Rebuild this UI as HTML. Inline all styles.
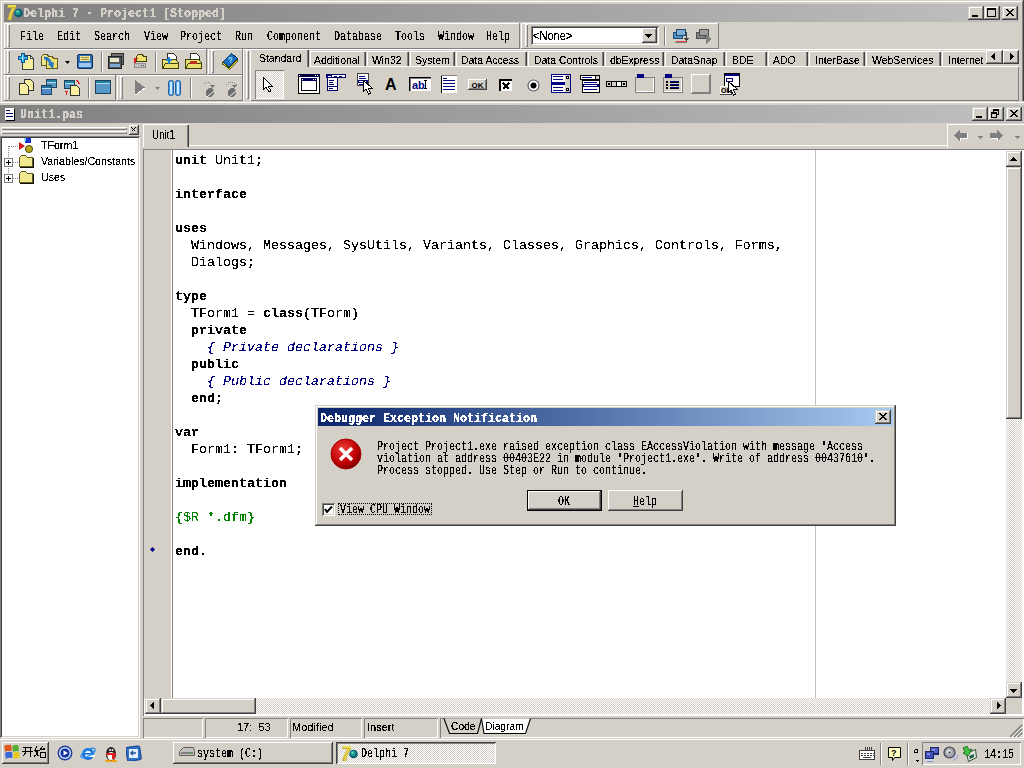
<!DOCTYPE html>
<html><head><meta charset="utf-8"><style>
*{margin:0;padding:0;box-sizing:border-box}
html,body{width:1024px;height:768px;overflow:hidden;background:#d4d0c8;position:relative;font-family:"Liberation Sans",sans-serif}
div,span,svg{position:absolute}
.btn{background:#d4d0c8;box-shadow:inset -1px -1px #404040,inset 1px 1px #fff,inset -2px -2px #808080}
.band{background:#d4d0c8;box-shadow:inset -1px -1px #808080,inset 1px 1px #fff}
.sunk{box-shadow:inset 1px 1px #808080,inset -1px -1px #fff}
.sunk2{box-shadow:inset 1px 1px #808080,inset -1px -1px #fff,inset 2px 2px #404040,inset -2px -2px #d4d0c8}
.grip{width:3px;box-shadow:inset 1px 1px #fff,inset -1px -1px #808080}
.ss,.ssb{filter:url(#thr)}
.code{filter:url(#thr5)}
.ts{filter:url(#thr5)}
.sbtn{background:#d4d0c8;box-shadow:inset -1px -1px #404040,inset 1px 1px #d4d0c8,inset -2px -2px #808080,inset 2px 2px #fff}
.ss{font-family:"Liberation Mono",monospace;font-size:12px;line-height:12px;white-space:pre;transform:scaleX(.8333);transform-origin:0 0;color:#000}
.ssb{font-family:"Liberation Mono",monospace;font-weight:bold;font-size:12px;line-height:12px;white-space:pre;transform:scaleX(.9722);transform-origin:0 0}
.ts{font-family:"Liberation Sans",sans-serif;font-size:11px;line-height:12px;white-space:pre;color:#000}
.code{left:175px;top:152px;font-family:"Liberation Mono",monospace;font-size:13.333px;line-height:17px;white-space:pre;color:#000}
.code b{font-weight:bold;position:static}
.code i{color:#000080;font-style:italic;position:static}
.code u{color:#008000;text-decoration:none;position:static}
.dith{background:repeating-conic-gradient(#fff 0 25%,#d4d0c8 0 50%) 0 0/2px 2px}
</style></head><body>
<svg width="0" height="0" style="position:absolute"><filter id="thr" x="0" y="0" width="100%" height="100%"><feComponentTransfer><feFuncA type="discrete" tableValues="0 1 1"/></feComponentTransfer></filter><filter id="thr5" x="0" y="0" width="100%" height="100%"><feComponentTransfer><feFuncA type="discrete" tableValues="0 0 1 1 1"/></feComponentTransfer></filter></svg>
<div style="left:1px;top:1px;width:1021px;height:1px;background:#fff"></div>
<div style="left:1px;top:1px;width:1px;height:100px;background:#fff"></div>
<div style="left:1022px;top:1px;width:1px;height:100px;background:#808080"></div>
<div style="left:1023px;top:0px;width:1px;height:101px;background:#404040"></div>
<div style="left:4px;top:4px;width:1015px;height:18px;background:linear-gradient(90deg,#808080,#c0c0c0)"></div>
<svg style="left:6px;top:4px" width="17" height="17" viewBox="0 0 17 17" shape-rendering="crispEdges"><path d="M1.5 1H10V3.5L6.5 10L5.5 16H1L3 10L6 4H1.5Z" fill="#c8a830" shape-rendering="auto"/><path d="M1.5 1H10V3H1.5Z" fill="#e8e050" /><path d="M6 3.5H9L6 10L5 15.5H2.5L3.5 10Z" fill="#e0d048" shape-rendering="auto"/><circle cx="12.5" cy="9" r="4.3" fill="#0a5a70" shape-rendering="auto"/><circle cx="12" cy="8.3" r="2.6" fill="#20a090" shape-rendering="auto"/><circle cx="11.5" cy="7.5" r="1" fill="#80e0d0" shape-rendering="auto"/></svg>
<span class="ssb" style="left:23px;top:8px;color:#d4d0c8">Delphi 7 - Project1 [Stopped]</span>
<div class="sbtn" style="left:968px;top:6px;width:16px;height:14px"></div><svg style="left:968px;top:6px" width="16" height="14" viewBox="0 0 16 14" shape-rendering="crispEdges"><rect x="4" y="9" width="6" height="2" fill="#000"/></svg>
<div class="sbtn" style="left:984px;top:6px;width:16px;height:14px"></div><svg style="left:984px;top:6px" width="16" height="14" viewBox="0 0 16 14" shape-rendering="crispEdges"><rect x="3" y="2" width="9" height="2" fill="#000"/><rect x="3" y="2" width="1" height="9" fill="#000"/><rect x="11" y="2" width="1" height="9" fill="#000"/><rect x="3" y="10" width="9" height="1" fill="#000"/></svg>
<div class="sbtn" style="left:1002px;top:6px;width:16px;height:14px"></div><svg style="left:1002px;top:6px" width="16" height="14" viewBox="0 0 16 14" shape-rendering="crispEdges"><rect x="4" y="3" width="1" height="1" fill="#000"/><rect x="5" y="3" width="1" height="1" fill="#000"/><rect x="10" y="3" width="1" height="1" fill="#000"/><rect x="11" y="3" width="1" height="1" fill="#000"/><rect x="5" y="4" width="1" height="1" fill="#000"/><rect x="6" y="4" width="1" height="1" fill="#000"/><rect x="9" y="4" width="1" height="1" fill="#000"/><rect x="10" y="4" width="1" height="1" fill="#000"/><rect x="6" y="5" width="1" height="1" fill="#000"/><rect x="7" y="5" width="1" height="1" fill="#000"/><rect x="8" y="5" width="1" height="1" fill="#000"/><rect x="9" y="5" width="1" height="1" fill="#000"/><rect x="7" y="6" width="1" height="1" fill="#000"/><rect x="8" y="6" width="1" height="1" fill="#000"/><rect x="6" y="7" width="1" height="1" fill="#000"/><rect x="7" y="7" width="1" height="1" fill="#000"/><rect x="8" y="7" width="1" height="1" fill="#000"/><rect x="9" y="7" width="1" height="1" fill="#000"/><rect x="5" y="8" width="1" height="1" fill="#000"/><rect x="6" y="8" width="1" height="1" fill="#000"/><rect x="9" y="8" width="1" height="1" fill="#000"/><rect x="10" y="8" width="1" height="1" fill="#000"/><rect x="4" y="9" width="1" height="1" fill="#000"/><rect x="5" y="9" width="1" height="1" fill="#000"/><rect x="10" y="9" width="1" height="1" fill="#000"/><rect x="11" y="9" width="1" height="1" fill="#000"/></svg>
<div class="band" style="left:4px;top:23px;width:516px;height:26px;"></div>
<div class="grip" style="left:7px;top:24px;width:3px;height:23px;"></div>
<span class="ss" style="left:20px;top:31px;">File</span>
<span class="ss" style="left:57px;top:31px;">Edit</span>
<span class="ss" style="left:94px;top:31px;">Search</span>
<span class="ss" style="left:144px;top:31px;">View</span>
<span class="ss" style="left:180px;top:31px;">Project</span>
<span class="ss" style="left:235px;top:31px;">Run</span>
<span class="ss" style="left:267px;top:31px;">Component</span>
<span class="ss" style="left:334px;top:31px;">Database</span>
<span class="ss" style="left:395px;top:31px;">Tools</span>
<span class="ss" style="left:438px;top:31px;">Window</span>
<span class="ss" style="left:486px;top:31px;">Help</span>
<div class="band" style="left:521px;top:23px;width:198px;height:26px;"></div>
<div class="grip" style="left:525px;top:24px;width:3px;height:23px;"></div>
<div class="sunk2" style="left:531px;top:26px;width:128px;height:19px;background:#fff"></div>
<div class="btn" style="left:642px;top:28px;width:15px;height:15px;"></div>
<svg style="left:642px;top:28px" width="15" height="15" viewBox="0 0 15 15" shape-rendering="crispEdges"><path d="M3 6H10L6.5 10Z" fill="#000" /></svg>
<span class="ts" style="left:533px;top:30px;font-size:12px;transform:scaleX(.92);transform-origin:0 0">&lt;None&gt;</span>
<div style="left:664px;top:26px;width:1px;height:20px;background:#808080"></div>
<div style="left:665px;top:26px;width:1px;height:20px;background:#fff"></div>
<div class="band" style="left:4px;top:49px;width:203px;height:26px;"></div>
<div class="grip" style="left:7px;top:50px;width:3px;height:23px;"></div>
<div class="band" style="left:208px;top:49px;width:35px;height:26px;"></div>
<div class="grip" style="left:211px;top:50px;width:3px;height:23px;"></div>
<div class="band" style="left:4px;top:75px;width:112px;height:26px;"></div>
<div class="grip" style="left:7px;top:76px;width:3px;height:23px;"></div>
<div class="band" style="left:117px;top:75px;width:126px;height:26px;"></div>
<div class="grip" style="left:120px;top:76px;width:3px;height:23px;"></div>
<div style="left:101px;top:52px;width:1px;height:20px;background:#808080"></div>
<div style="left:102px;top:52px;width:1px;height:20px;background:#fff"></div>
<div style="left:155px;top:52px;width:1px;height:20px;background:#808080"></div>
<div style="left:156px;top:52px;width:1px;height:20px;background:#fff"></div>
<div style="left:88px;top:78px;width:1px;height:20px;background:#808080"></div>
<div style="left:89px;top:78px;width:1px;height:20px;background:#fff"></div>
<div style="left:190px;top:78px;width:1px;height:20px;background:#808080"></div>
<div style="left:191px;top:78px;width:1px;height:20px;background:#fff"></div>
<div style="left:243px;top:49px;width:776px;height:52px;background:#d4d0c8;box-shadow:inset 1px 1px #fff"></div>
<div class="grip" style="left:246px;top:50px;width:3px;height:49px;"></div>
<div style="left:250px;top:66px;width:769px;height:35px;background:#d4d0c8;box-shadow:inset 1px 1px #fff,inset -1px -1px #808080"></div>
<div style="left:250px;top:49px;width:59px;height:18px;background:#d4d0c8;box-shadow:inset 1px 1px #fff,inset -1px 0 #404040,inset -2px 0 #808080"></div>
<span class="ts" style="left:259px;top:52px;transform:scaleX(.95);transform-origin:0 0">Standard</span>
<div style="left:310px;top:51px;width:56px;height:15px;background:#d4d0c8;box-shadow:inset 1px 1px #fff,inset -1px 0 #404040,inset -2px 0 #808080;overflow:hidden"></div>
<span class="ts" style="left:314px;top:54px;transform:scaleX(.95);transform-origin:0 0">Additional</span>
<div style="left:367px;top:51px;width:42px;height:15px;background:#d4d0c8;box-shadow:inset 1px 1px #fff,inset -1px 0 #404040,inset -2px 0 #808080;overflow:hidden"></div>
<span class="ts" style="left:372px;top:54px;transform:scaleX(.95);transform-origin:0 0">Win32</span>
<div style="left:410px;top:51px;width:45px;height:15px;background:#d4d0c8;box-shadow:inset 1px 1px #fff,inset -1px 0 #404040,inset -2px 0 #808080;overflow:hidden"></div>
<span class="ts" style="left:415px;top:54px;transform:scaleX(.95);transform-origin:0 0">System</span>
<div style="left:456px;top:51px;width:71px;height:15px;background:#d4d0c8;box-shadow:inset 1px 1px #fff,inset -1px 0 #404040,inset -2px 0 #808080;overflow:hidden"></div>
<span class="ts" style="left:461px;top:54px;transform:scaleX(.95);transform-origin:0 0">Data Access</span>
<div style="left:528px;top:51px;width:76px;height:15px;background:#d4d0c8;box-shadow:inset 1px 1px #fff,inset -1px 0 #404040,inset -2px 0 #808080;overflow:hidden"></div>
<span class="ts" style="left:534px;top:54px;transform:scaleX(.95);transform-origin:0 0">Data Controls</span>
<div style="left:605px;top:51px;width:59px;height:15px;background:#d4d0c8;box-shadow:inset 1px 1px #fff,inset -1px 0 #404040,inset -2px 0 #808080;overflow:hidden"></div>
<span class="ts" style="left:610px;top:54px;transform:scaleX(.95);transform-origin:0 0">dbExpress</span>
<div style="left:665px;top:51px;width:60px;height:15px;background:#d4d0c8;box-shadow:inset 1px 1px #fff,inset -1px 0 #404040,inset -2px 0 #808080;overflow:hidden"></div>
<span class="ts" style="left:671px;top:54px;transform:scaleX(.95);transform-origin:0 0">DataSnap</span>
<div style="left:726px;top:51px;width:41px;height:15px;background:#d4d0c8;box-shadow:inset 1px 1px #fff,inset -1px 0 #404040,inset -2px 0 #808080;overflow:hidden"></div>
<span class="ts" style="left:732px;top:54px;transform:scaleX(.95);transform-origin:0 0">BDE</span>
<div style="left:768px;top:51px;width:40px;height:15px;background:#d4d0c8;box-shadow:inset 1px 1px #fff,inset -1px 0 #404040,inset -2px 0 #808080;overflow:hidden"></div>
<span class="ts" style="left:773px;top:54px;transform:scaleX(.95);transform-origin:0 0">ADO</span>
<div style="left:809px;top:51px;width:56px;height:15px;background:#d4d0c8;box-shadow:inset 1px 1px #fff,inset -1px 0 #404040,inset -2px 0 #808080;overflow:hidden"></div>
<span class="ts" style="left:815px;top:54px;transform:scaleX(.95);transform-origin:0 0">InterBase</span>
<div style="left:866px;top:51px;width:75px;height:15px;background:#d4d0c8;box-shadow:inset 1px 1px #fff,inset -1px 0 #404040,inset -2px 0 #808080;overflow:hidden"></div>
<span class="ts" style="left:872px;top:54px;transform:scaleX(.95);transform-origin:0 0">WebServices</span>
<div style="left:942px;top:51px;width:59px;height:15px;background:#d4d0c8;box-shadow:inset 1px 1px #fff,inset -1px 0 #404040,inset -2px 0 #808080;overflow:hidden"></div>
<span class="ts" style="left:948px;top:54px;transform:scaleX(.95);transform-origin:0 0">Internet</span>
<div style="left:986px;top:50px;width:33px;height:16px;background:#d4d0c8"></div>
<div class="btn" style="left:986px;top:50px;width:17px;height:14px;"></div>
<svg style="left:986px;top:50px" width="17" height="14" viewBox="0 0 17 14" shape-rendering="crispEdges"><path d="M9 3V10L5 6.5Z" fill="#000" /></svg>
<div class="btn" style="left:1003px;top:50px;width:16px;height:14px;"></div>
<svg style="left:1003px;top:50px" width="16" height="14" viewBox="0 0 16 14" shape-rendering="crispEdges"><path d="M7 3V10L11 6.5Z" fill="#000" /></svg>
<div class="dith" style="left:255px;top:70px;width:29px;height:29px;box-shadow:inset 1px 1px #808080,inset -1px -1px #fff"></div>
<svg style="left:262px;top:77px" width="14" height="16" viewBox="0 0 14 16" shape-rendering="crispEdges"><path d="M1 0V13L4 10L7 15L9 14L6 9H10Z" fill="#fff" stroke="#000" stroke-width="1"/></svg>
<div style="left:0px;top:101px;width:1024px;height:637px;background:#d4d0c8"></div>
<div style="left:0px;top:102px;width:1024px;height:1px;background:#fff"></div>
<div style="left:0px;top:105px;width:1024px;height:18px;background:linear-gradient(90deg,#808080,#c0c0c0)"></div>
<svg style="left:5px;top:108px" width="10" height="13" viewBox="0 0 10 13" shape-rendering="crispEdges"><rect x="0" y="0" width="9" height="12" fill="#fff"/><rect x="9" y="1" width="1" height="12" fill="#000"/><rect x="1" y="12" width="9" height="1" fill="#000"/><rect x="1" y="2" width="4" height="1" fill="#000060"/><rect x="1" y="5" width="7" height="1" fill="#000060"/><rect x="1" y="8" width="7" height="1" fill="#000060"/></svg>
<span class="ssb" style="left:20px;top:109px;color:#d4d0c8">Unit1.pas</span>
<div class="sbtn" style="left:972px;top:107px;width:16px;height:14px"></div><svg style="left:972px;top:107px" width="16" height="14" viewBox="0 0 16 14" shape-rendering="crispEdges"><rect x="4" y="9" width="6" height="2" fill="#000"/></svg>
<div class="sbtn" style="left:988px;top:107px;width:16px;height:14px"></div><svg style="left:988px;top:107px" width="16" height="14" viewBox="0 0 16 14" shape-rendering="crispEdges"><rect x="5" y="2" width="6" height="2" fill="#000"/><rect x="10" y="2" width="1" height="6" fill="#000"/><rect x="9" y="7" width="2" height="1" fill="#000"/><rect x="5" y="2" width="1" height="3" fill="#000"/><rect x="3" y="5" width="6" height="2" fill="#000"/><rect x="3" y="5" width="1" height="6" fill="#000"/><rect x="8" y="5" width="1" height="6" fill="#000"/><rect x="3" y="10" width="6" height="1" fill="#000"/></svg>
<div class="sbtn" style="left:1006px;top:107px;width:16px;height:14px"></div><svg style="left:1006px;top:107px" width="16" height="14" viewBox="0 0 16 14" shape-rendering="crispEdges"><rect x="4" y="3" width="1" height="1" fill="#000"/><rect x="5" y="3" width="1" height="1" fill="#000"/><rect x="10" y="3" width="1" height="1" fill="#000"/><rect x="11" y="3" width="1" height="1" fill="#000"/><rect x="5" y="4" width="1" height="1" fill="#000"/><rect x="6" y="4" width="1" height="1" fill="#000"/><rect x="9" y="4" width="1" height="1" fill="#000"/><rect x="10" y="4" width="1" height="1" fill="#000"/><rect x="6" y="5" width="1" height="1" fill="#000"/><rect x="7" y="5" width="1" height="1" fill="#000"/><rect x="8" y="5" width="1" height="1" fill="#000"/><rect x="9" y="5" width="1" height="1" fill="#000"/><rect x="7" y="6" width="1" height="1" fill="#000"/><rect x="8" y="6" width="1" height="1" fill="#000"/><rect x="6" y="7" width="1" height="1" fill="#000"/><rect x="7" y="7" width="1" height="1" fill="#000"/><rect x="8" y="7" width="1" height="1" fill="#000"/><rect x="9" y="7" width="1" height="1" fill="#000"/><rect x="5" y="8" width="1" height="1" fill="#000"/><rect x="6" y="8" width="1" height="1" fill="#000"/><rect x="9" y="8" width="1" height="1" fill="#000"/><rect x="10" y="8" width="1" height="1" fill="#000"/><rect x="4" y="9" width="1" height="1" fill="#000"/><rect x="5" y="9" width="1" height="1" fill="#000"/><rect x="10" y="9" width="1" height="1" fill="#000"/><rect x="11" y="9" width="1" height="1" fill="#000"/></svg>
<div style="left:1px;top:127px;width:126px;height:3px;box-shadow:inset 1px 1px #fff,inset -1px -1px #808080"></div>
<div style="left:1px;top:131px;width:126px;height:3px;box-shadow:inset 1px 1px #fff,inset -1px -1px #808080"></div>
<div class="btn" style="left:129px;top:125px;width:10px;height:10px;"></div>
<svg style="left:129px;top:125px" width="10" height="10" viewBox="0 0 10 10" shape-rendering="crispEdges"><path d="M2.5 2.5L6.5 6.5M6.5 2.5L2.5 6.5" stroke="#000" stroke-width="1" fill="none"/></svg>
<div class="sunk2" style="left:0px;top:136px;width:140px;height:602px;background:#fff"></div>
<div style="left:143px;top:145px;width:804px;height:1px;background:#fff"></div>
<div style="left:143px;top:124px;width:46px;height:23px;background:#d4d0c8;box-shadow:inset 1px 1px #fff,inset -1px 0 #404040,inset -2px 0 #808080"></div>
<span class="ts" style="left:152px;top:129px;font-size:12px;transform:scaleX(.82);transform-origin:0 0">Unit1</span>
<div style="left:143px;top:149px;width:881px;height:567px;background:#fff;box-shadow:inset 1px 1px #808080,inset -1px -1px #fff"></div>
<div style="left:144px;top:150px;width:27px;height:548px;background:#d4d0c8"></div>
<div style="left:172px;top:150px;width:1px;height:548px;background:#808080"></div>
<div style="left:815px;top:150px;width:1px;height:548px;background:#c0c0c0"></div>
<svg style="left:150px;top:547px;shape-rendering:auto" width="5" height="5" viewBox="0 0 5 5" shape-rendering="crispEdges"><path d="M2.5 0L5 2.5L2.5 5L0 2.5Z" fill="#000080" /></svg>
<div class="code"><b>unit</b> Unit1;

<b>interface</b>

<b>uses</b>
  Windows, Messages, SysUtils, Variants, Classes, Graphics, Controls, Forms,
  Dialogs;

<b>type</b>
  TForm1 = <b>class</b>(TForm)
  <b>private</b>
    <i>{ Private declarations }</i>
  <b>public</b>
    <i>{ Public declarations }</i>
  <b>end</b>;

<b>var</b>
  Form1: TForm1;

<b>implementation</b>

<u>{$R *.dfm}</u>

<b>end</b>.</div>
<div class="dith" style="left:1006px;top:151px;width:16px;height:547px;"></div>
<div class="sbtn" style="left:1006px;top:151px;width:16px;height:16px;"></div>
<svg style="left:1006px;top:151px" width="16" height="16" viewBox="0 0 16 16" shape-rendering="crispEdges"><path d="M4 10H11L7.5 6Z" fill="#000" /></svg>
<div class="sbtn" style="left:1006px;top:167px;width:16px;height:252px;"></div>
<div class="sbtn" style="left:1006px;top:682px;width:16px;height:16px;"></div>
<svg style="left:1006px;top:682px" width="16" height="16" viewBox="0 0 16 16" shape-rendering="crispEdges"><path d="M4 7H11L7.5 11Z" fill="#000" /></svg>
<div class="dith" style="left:145px;top:698px;width:861px;height:16px;"></div>
<div class="sbtn" style="left:145px;top:698px;width:16px;height:16px;"></div>
<svg style="left:145px;top:698px" width="16" height="16" viewBox="0 0 16 16" shape-rendering="crispEdges"><path d="M9 4V11L5 7.5Z" fill="#000" /></svg>
<div class="sbtn" style="left:161px;top:698px;width:95px;height:16px;"></div>
<div class="sbtn" style="left:990px;top:698px;width:16px;height:16px;"></div>
<svg style="left:990px;top:698px" width="16" height="16" viewBox="0 0 16 16" shape-rendering="crispEdges"><path d="M7 4V11L11 7.5Z" fill="#000" /></svg>
<div style="left:1006px;top:698px;width:16px;height:16px;background:#d4d0c8"></div>
<div class="sunk" style="left:143px;top:718px;width:60px;height:20px;"></div>
<div class="sunk" style="left:205px;top:718px;width:83px;height:20px;"></div>
<div class="sunk" style="left:290px;top:718px;width:72px;height:20px;"></div>
<div class="sunk" style="left:364px;top:718px;width:74px;height:20px;"></div>
<div class="sunk" style="left:440px;top:718px;width:584px;height:20px;"></div>
<span class="ts" style="left:237px;top:721px;font-size:11px">17:  53</span>
<span class="ts" style="left:292px;top:721px;font-size:11px">Modified</span>
<span class="ts" style="left:367px;top:721px;font-size:11px">Insert</span>
<div style="left:0px;top:738px;width:1024px;height:30px;background:#d4d0c8"></div>
<div style="left:0px;top:739px;width:1024px;height:1px;background:#fff"></div>
<div class="btn" style="left:2px;top:742px;width:47px;height:22px;"></div>
<div class="btn" style="left:173px;top:742px;width:160px;height:22px;"></div>
<div class="dith" style="left:336px;top:742px;width:160px;height:22px;box-shadow:inset 1px 1px #404040,inset -1px -1px #fff,inset 2px 2px #808080"></div>
<span class="ss" style="left:197px;top:748px;">system (C:)</span>
<span class="ss" style="left:361px;top:748px;">Delphi 7</span>
<div class="sunk" style="left:922px;top:742px;width:99px;height:23px;"></div>
<span class="ss" style="left:984px;top:749px;font-family:"Liberation Serif",serif;font-size:13px;transform:none;letter-spacing:-0.5px">14:15</span>
<div style="left:315px;top:405px;width:581px;height:121px;background:#d4d0c8;box-shadow:inset -1px -1px #404040,inset 1px 1px #d4d0c8,inset -2px -2px #808080,inset 2px 2px #fff"></div>
<div style="left:318px;top:408px;width:575px;height:18px;background:linear-gradient(90deg,#0a246a,#a6caf0)"></div>
<span class="ssb" style="left:320px;top:413px;color:#fff">Debugger Exception Notification</span>
<div class="sbtn" style="left:875px;top:410px;width:16px;height:14px"></div><svg style="left:875px;top:410px" width="16" height="14" viewBox="0 0 16 14" shape-rendering="crispEdges"><rect x="4" y="3" width="1" height="1" fill="#000"/><rect x="5" y="3" width="1" height="1" fill="#000"/><rect x="10" y="3" width="1" height="1" fill="#000"/><rect x="11" y="3" width="1" height="1" fill="#000"/><rect x="5" y="4" width="1" height="1" fill="#000"/><rect x="6" y="4" width="1" height="1" fill="#000"/><rect x="9" y="4" width="1" height="1" fill="#000"/><rect x="10" y="4" width="1" height="1" fill="#000"/><rect x="6" y="5" width="1" height="1" fill="#000"/><rect x="7" y="5" width="1" height="1" fill="#000"/><rect x="8" y="5" width="1" height="1" fill="#000"/><rect x="9" y="5" width="1" height="1" fill="#000"/><rect x="7" y="6" width="1" height="1" fill="#000"/><rect x="8" y="6" width="1" height="1" fill="#000"/><rect x="6" y="7" width="1" height="1" fill="#000"/><rect x="7" y="7" width="1" height="1" fill="#000"/><rect x="8" y="7" width="1" height="1" fill="#000"/><rect x="9" y="7" width="1" height="1" fill="#000"/><rect x="5" y="8" width="1" height="1" fill="#000"/><rect x="6" y="8" width="1" height="1" fill="#000"/><rect x="9" y="8" width="1" height="1" fill="#000"/><rect x="10" y="8" width="1" height="1" fill="#000"/><rect x="4" y="9" width="1" height="1" fill="#000"/><rect x="5" y="9" width="1" height="1" fill="#000"/><rect x="10" y="9" width="1" height="1" fill="#000"/><rect x="11" y="9" width="1" height="1" fill="#000"/></svg>
<span class="ss" style="left:377px;top:441px;">Project Project1.exe raised exception class EAccessViolation with message 'Access
violation at address 00403E22 in module 'Project1.exe'. Write of address 00437610'.
Process stopped. Use Step or Run to continue.</span>
<div style="left:527px;top:490px;width:75px;height:21px;background:#d4d0c8;box-shadow:inset 0 0 0 1px #000,inset -2px -2px #404040,inset 2px 2px #fff,inset -3px -3px #808080"></div>
<div class="btn" style="left:608px;top:490px;width:75px;height:21px;"></div>
<span class="ss" style="left:558px;top:496px;">OK</span>
<span class="ss" style="left:633px;top:496px;"><span style="position:static;text-decoration:underline">H</span>elp</span>
<div class="sunk2" style="left:322px;top:503px;width:13px;height:13px;background:#fff"></div>
<span class="ss" style="left:340px;top:504px;">View CPU Window</span>
<svg style="left:18px;top:53px" width="17" height="17" viewBox="0 0 17 17" shape-rendering="crispEdges"><path d="M4.5 2.5H12.5L15.5 5.5V16.5H4.5Z" fill="#f8f0a0" stroke="#404040" stroke-width="1"/><path d="M12.5 2.5L15.5 5.5H12.5Z" fill="#fff" stroke="#404040" stroke-width="1"/><path d="M3.5 0.5H6.5V3.5H9.5V6.5H6.5V9.5H3.5V6.5H0.5V3.5H3.5Z" fill="#38b0e8" stroke="#0a5a9a" stroke-width="1"/><rect x="4" y="2" width="1" height="5" fill="#b0e8ff"/></svg>
<svg style="left:41px;top:54px" width="17" height="17" viewBox="0 0 17 17" shape-rendering="crispEdges"><path d="M0.5 2.5L2.5 0.5H6.5L7.5 2.5H10.5V11.5H0.5Z" fill="#f0e890" stroke="#605820" stroke-width="1"/><path d="M5.5 4.5L7.5 2.5H11.5L12.5 4.5H16.5V14.5H5.5Z" fill="#f0e070" stroke="#605820" stroke-width="1"/><path d="M3 4Q8 4 10 10" stroke="#2878c8" stroke-width="3" fill="none" shape-rendering="auto"/><path d="M7 10L12 15L13 8Z" fill="#2878c8" shape-rendering="auto"/></svg>
<svg style="left:65px;top:61px" width="6" height="3" viewBox="0 0 6 3" shape-rendering="crispEdges"><path d="M0 0H5L2.5 3Z" fill="#000" shape-rendering="auto"/></svg>
<svg style="left:77px;top:54px" width="17" height="16" viewBox="0 0 17 16" shape-rendering="crispEdges"><rect x="0.5" y="0.5" width="15" height="14" rx="2" fill="#3070b0" stroke="#103060"/><rect x="3" y="2" width="10" height="5" fill="#f0e898"/><rect x="4" y="3" width="8" height="1" fill="#a09040"/><rect x="4" y="5" width="8" height="1" fill="#a09040"/><rect x="2" y="9" width="12" height="4" fill="#a0c8f0"/></svg>
<svg style="left:108px;top:53px" width="17" height="17" viewBox="0 0 17 17" shape-rendering="crispEdges"><rect x="3.5" y="0.5" width="12" height="11" fill="#707070" stroke="#303030"/><rect x="0.5" y="3.5" width="13" height="12" rx="1" fill="#505860" stroke="#202020"/><rect x="2" y="5" width="9" height="4" fill="#e8e8c8"/><rect x="2" y="11" width="10" height="3" fill="#80a8d0"/></svg>
<svg style="left:131px;top:53px" width="17" height="17" viewBox="0 0 17 17" shape-rendering="crispEdges"><path d="M5.5 3.5L7.5 1.5H11.5L12.5 3.5H15.5V8.5H5.5Z" fill="#f0e070" stroke="#404000" stroke-width="1"/><rect x="3" y="10" width="12" height="5" fill="#909090"/><rect x="4" y="11" width="10" height="3" fill="#c0c0c0"/><rect x="10" y="12" width="1" height="1" fill="#404040"/><rect x="12" y="12" width="1" height="1" fill="#404040"/><path d="M4 9.5V5.5H7" stroke="#e02020" stroke-width="1.3" fill="none"/></svg>
<svg style="left:162px;top:53px" width="17" height="17" viewBox="0 0 17 17" shape-rendering="crispEdges"><path d="M5.5 0.5H11.5L14.5 3.5V11.5H5.5Z" fill="#ffffff" stroke="#303030" stroke-width="1"/><path d="M0.5 6.5H13.5L16.5 9.5V15.5H0.5Z" fill="#e8e070" stroke="#404000" stroke-width="1"/><path d="M0.5 15.5L3.5 10.5H16.5" stroke="#404000" fill="none"/><rect x="6" y="4" width="2" height="7" fill="#2080d0"/><rect x="4" y="6" width="6" height="2" fill="#2080d0"/></svg>
<svg style="left:185px;top:53px" width="17" height="17" viewBox="0 0 17 17" shape-rendering="crispEdges"><path d="M5.5 0.5H11.5L14.5 3.5V11.5H5.5Z" fill="#ffffff" stroke="#303030" stroke-width="1"/><path d="M0.5 6.5H13.5L16.5 9.5V15.5H0.5Z" fill="#e8e070" stroke="#404000" stroke-width="1"/><path d="M0.5 15.5L3.5 10.5H16.5" stroke="#404000" fill="none"/><rect x="5" y="8" width="7" height="3" fill="#c03020"/></svg>
<svg style="left:222px;top:53px" width="17" height="17" viewBox="0 0 17 17" shape-rendering="crispEdges"><path d="M0.5 9.5L9.5 0.5L15.5 5.5L6.5 14.5Z" fill="#1870c0" stroke="#103060" stroke-width="1"/><path d="M0.5 9.5V11.5L6.5 16.5L15.5 7.5V5.5L6.5 14.5Z" fill="#e8e030" stroke="#404000" stroke-width="0.8"/><text x="6" y="10" font-family="Liberation Sans" font-weight="bold" font-size="8" fill="#a0e0f0" transform="rotate(-10 8 8)">?</text></svg>
<svg style="left:18px;top:79px" width="17" height="17" viewBox="0 0 17 17" shape-rendering="crispEdges"><path d="M6.5 0.5H12.5L15.5 3.5V11.5H6.5Z" fill="#f8f0a0" stroke="#303030" stroke-width="1"/><path d="M1.5 4.5H7.5L10.5 7.5V15.5H1.5Z" fill="#f8f0a0" stroke="#303030" stroke-width="1"/></svg>
<svg style="left:41px;top:79px" width="17" height="17" viewBox="0 0 17 17" shape-rendering="crispEdges"><rect x="5" y="0" width="11" height="9" fill="#204060"/><rect x="6" y="1" width="9" height="2" fill="#2080a0"/><rect x="6" y="3" width="9" height="1" fill="#b0e0f0"/><rect x="6" y="4" width="9" height="4" fill="#5898c8"/><rect x="5" y="9" width="0" height="0" fill="#000"/><rect x="0" y="6" width="11" height="10" fill="#204060"/><rect x="1" y="7" width="9" height="2" fill="#2070a0"/><rect x="1" y="9" width="9" height="1" fill="#b0e0f0"/><rect x="1" y="10" width="9" height="5" fill="#5088c8"/></svg>
<svg style="left:64px;top:79px" width="17" height="17" viewBox="0 0 17 17" shape-rendering="crispEdges"><rect x="0" y="1" width="11" height="9" fill="#204060"/><rect x="1" y="2" width="9" height="2" fill="#2080a0"/><rect x="1" y="4" width="9" height="1" fill="#b0e0f0"/><rect x="1" y="5" width="9" height="4" fill="#5898c8"/><path d="M6.5 6.5H12.5L15.5 9.5V16.5H6.5Z" fill="#f8f0a0" stroke="#303030" stroke-width="1"/><path d="M12 1.5C14 1.5 15 2.5 15 4.5" stroke="#e02020" stroke-width="1.3" fill="none"/><rect x="2" y="12" width="1" height="4" fill="#e02020"/><rect x="1" y="12" width="3" height="1" fill="#e02020"/></svg>
<svg style="left:95px;top:79px" width="17" height="17" viewBox="0 0 17 17" shape-rendering="crispEdges"><rect x="0" y="1" width="16" height="14" fill="#204060"/><rect x="1" y="2" width="14" height="2" fill="#2080a0"/><rect x="1" y="4" width="14" height="1" fill="#b0e0f0"/><rect x="1" y="5" width="14" height="9" fill="#5898c8"/></svg>
<svg style="left:135px;top:80px" width="12" height="16" viewBox="0 0 12 16" shape-rendering="crispEdges"><path d="M0 0L10 7.5L0 15Z" fill="#808080" /><path d="M0.5 15L10.5 7.5" stroke="#fff" stroke-width="1" fill="none"/></svg>
<svg style="left:155px;top:87px" width="6" height="4" viewBox="0 0 6 4" shape-rendering="crispEdges"><path d="M0 0H5L2.5 3Z" fill="#808080" shape-rendering="auto"/></svg>
<svg style="left:168px;top:80px;shape-rendering:auto" width="14" height="17" viewBox="0 0 14 17" shape-rendering="crispEdges"><rect x="0.5" y="0.5" width="5" height="15" rx="2" fill="#58a0e0" stroke="#2060a8"/><rect x="2" y="2" width="2" height="12" fill="#c8ecff"/><rect x="7.5" y="0.5" width="5" height="15" rx="2" fill="#58a0e0" stroke="#2060a8"/><rect x="9" y="2" width="2" height="12" fill="#c8ecff"/></svg>
<svg style="left:203px;top:82px;shape-rendering:auto" width="14" height="16" viewBox="0 0 14 16" shape-rendering="crispEdges"><rect x="1" y="1" width="1" height="1" fill="#808080"/><rect x="3" y="0" width="1" height="1" fill="#808080"/><rect x="5" y="0" width="1" height="1" fill="#808080"/><rect x="7" y="1" width="1" height="1" fill="#808080"/><path d="M7 3H12L9.5 6Z" fill="#707070" /><path d="M3 9L6 6H9L11 9V12L8 15H5L3 13Z" fill="#6e6e6e" /><path d="M4 15L11 9" stroke="#fff" stroke-width="1" fill="none"/></svg>
<svg style="left:225px;top:82px;shape-rendering:auto" width="14" height="16" viewBox="0 0 14 16" shape-rendering="crispEdges"><rect x="1" y="2" width="1" height="1" fill="#808080"/><rect x="3" y="0" width="1" height="1" fill="#808080"/><rect x="5" y="0" width="1" height="1" fill="#808080"/><rect x="7" y="0" width="1" height="1" fill="#808080"/><rect x="9" y="1" width="1" height="1" fill="#808080"/><rect x="11" y="2" width="1" height="1" fill="#808080"/><path d="M7 3H12L9.5 6Z" fill="#707070" /><path d="M3 9L6 6H9L11 9V12L8 15H5L3 13Z" fill="#6e6e6e" /><path d="M4 15L11 9" stroke="#fff" stroke-width="1" fill="none"/></svg>
<svg style="left:298px;top:74px" width="22" height="20" viewBox="0 0 22 20" shape-rendering="crispEdges"><rect x="0" y="0" width="22" height="20" fill="#000"/><rect x="1" y="1" width="20" height="18" fill="#fff"/><rect x="0" y="0" width="22" height="3" fill="#000040"/><rect x="1" y="1" width="1" height="1" fill="#fff"/><rect x="17" y="1" width="1" height="1" fill="#fff"/><rect x="19" y="1" width="1" height="1" fill="#fff"/><rect x="3" y="4" width="16" height="13" fill="#000"/><rect x="4" y="5" width="14" height="11" fill="#fff"/><rect x="3" y="4" width="16" height="3" fill="#000060"/><rect x="4" y="5" width="1" height="1" fill="#fff"/><rect x="15" y="5" width="1" height="1" fill="#fff"/><rect x="17" y="5" width="1" height="1" fill="#fff"/></svg>
<svg style="left:326px;top:74px" width="20" height="17" viewBox="0 0 20 17" shape-rendering="crispEdges"><rect x="0" y="0" width="20" height="4" fill="#000060"/><rect x="1" y="1" width="18" height="2" fill="#fff"/><rect x="1" y="1" width="5" height="2" fill="#000080"/><rect x="2" y="2" width="3" height="1" fill="#fff"/><rect x="8" y="2" width="3" height="1" fill="#000060"/><rect x="13" y="2" width="3" height="1" fill="#000060"/><rect x="1" y="4" width="11" height="13" fill="#000060"/><rect x="2" y="4" width="9" height="12" fill="#fff"/><rect x="3" y="6" width="5" height="1" fill="#000060"/><rect x="3" y="8" width="4" height="1" fill="#000060"/><rect x="3" y="10" width="5" height="1" fill="#000060"/><rect x="2" y="12" width="9" height="1" fill="#000060"/><rect x="3" y="14" width="4" height="1" fill="#000060"/></svg>
<svg style="left:357px;top:73px" width="17" height="22" viewBox="0 0 17 22" shape-rendering="crispEdges"><rect x="0" y="0" width="12" height="13" fill="#404040"/><rect x="1" y="1" width="10" height="11" fill="#fff"/><rect x="2" y="3" width="6" height="1" fill="#000080"/><rect x="2" y="5" width="7" height="1" fill="#000080"/><rect x="1" y="7" width="10" height="3" fill="#000080"/><rect x="2" y="8" width="7" height="1" fill="#fff"/><rect x="2" y="11" width="6" height="1" fill="#000080"/><path d="M6 7V19L9 16L11.5 21L13.5 20L11 15H15Z" fill="#fff" stroke="#000" stroke-width="1"/></svg>
<svg style="left:385px;top:78px" width="17" height="13" viewBox="0 0 17 13" shape-rendering="crispEdges"><text x="0" y="12" font-family="Liberation Sans" font-weight="bold" font-size="16" fill="#000" shape-rendering="auto">A</text></svg>
<svg style="left:409px;top:77px" width="22" height="14" viewBox="0 0 22 14" shape-rendering="crispEdges"><rect x="0" y="0" width="22" height="14" fill="#000"/><rect x="1" y="1" width="21" height="13" fill="#fff"/><rect x="1" y="1" width="21" height="1" fill="#808080"/><rect x="1" y="1" width="1" height="13" fill="#808080"/><text x="3" y="11.5" font-family="Liberation Sans" font-weight="bold" font-size="11" fill="#000080">ab</text><rect x="16" y="3" width="1" height="9" fill="#000"/><rect x="15" y="3" width="3" height="1" fill="#000"/><rect x="15" y="11" width="3" height="1" fill="#000"/></svg>
<svg style="left:441px;top:75px" width="16" height="18" viewBox="0 0 16 18" shape-rendering="crispEdges"><rect x="0" y="0" width="16" height="18" fill="#000"/><rect x="1" y="1" width="15" height="17" fill="#fff"/><rect x="0" y="0" width="16" height="1" fill="#808080"/><rect x="2" y="3" width="4" height="1" fill="#000080"/><rect x="2" y="5" width="12" height="1" fill="#000080"/><rect x="2" y="8" width="12" height="1" fill="#000080"/><rect x="2" y="11" width="12" height="1" fill="#000080"/><rect x="2" y="14" width="12" height="1" fill="#000080"/></svg>
<svg style="left:468px;top:79px" width="19" height="11" viewBox="0 0 19 11" shape-rendering="crispEdges"><rect x="0" y="0" width="19" height="11" fill="#404040"/><rect x="0" y="0" width="18" height="10" fill="#fff"/><rect x="1" y="1" width="17" height="9" fill="#808080"/><rect x="1" y="1" width="16" height="8" fill="#d4d0c8"/><text x="3.5" y="8.5" font-family="Liberation Sans" font-weight="bold" font-size="8" fill="#000">OK</text></svg>
<svg style="left:499px;top:79px" width="13" height="12" viewBox="0 0 13 12" shape-rendering="crispEdges"><rect x="0" y="0" width="13" height="12" fill="#000"/><rect x="2" y="2" width="11" height="10" fill="#fff"/><path d="M4 4L10 10M10 4L4 10" stroke="#000" stroke-width="2" fill="none"/></svg>
<svg style="left:527px;top:79px" width="13" height="13" viewBox="0 0 13 13" shape-rendering="crispEdges"><circle cx="6.5" cy="6.5" r="5.5" fill="#fff" stroke="#606060" stroke-width="1.2" shape-rendering="auto"/><circle cx="6.5" cy="6.5" r="3" fill="#000" shape-rendering="auto"/></svg>
<svg style="left:551px;top:74px" width="20" height="19" viewBox="0 0 20 19" shape-rendering="crispEdges"><rect x="0" y="0" width="20" height="19" fill="#000080"/><rect x="1" y="1" width="13" height="17" fill="#fff"/><rect x="2" y="2" width="10" height="1" fill="#000080"/><rect x="2" y="5" width="10" height="1" fill="#000080"/><rect x="0" y="8" width="14" height="3" fill="#000080"/><rect x="2" y="13" width="10" height="1" fill="#000080"/><rect x="2" y="16" width="10" height="1" fill="#000080"/><rect x="14" y="1" width="5" height="17" fill="#d4d0c8"/><rect x="15" y="2" width="3" height="3" fill="#000"/><rect x="16" y="3" width="1" height="1" fill="#fff"/><rect x="15" y="14" width="3" height="3" fill="#000"/><rect x="16" y="15" width="1" height="1" fill="#fff"/></svg>
<svg style="left:580px;top:75px" width="20" height="18" viewBox="0 0 20 18" shape-rendering="crispEdges"><rect x="0" y="0" width="20" height="5" fill="#000"/><rect x="1" y="1" width="14" height="3" fill="#fff"/><rect x="2" y="2" width="10" height="1" fill="#000080"/><rect x="16" y="1" width="3" height="3" fill="#d4d0c8"/><rect x="2" y="5" width="18" height="13" fill="#000"/><rect x="3" y="6" width="16" height="11" fill="#fff"/><rect x="4" y="7" width="13" height="1" fill="#000080"/><rect x="3" y="9" width="16" height="3" fill="#000080"/><rect x="4" y="10" width="13" height="1" fill="#fff"/><rect x="4" y="14" width="13" height="1" fill="#000080"/></svg>
<svg style="left:606px;top:81px" width="21" height="6" viewBox="0 0 21 6" shape-rendering="crispEdges"><rect x="0" y="0" width="21" height="6" fill="#000"/><rect x="1" y="1" width="4" height="4" fill="#d4d0c8"/><rect x="6" y="1" width="4" height="4" fill="#d4d0c8"/><rect x="11" y="1" width="4" height="4" fill="#fff"/><rect x="16" y="1" width="4" height="4" fill="#d4d0c8"/><rect x="2" y="2" width="2" height="2" fill="#000"/><rect x="17" y="2" width="2" height="2" fill="#000"/></svg>
<svg style="left:635px;top:74px" width="20" height="19" viewBox="0 0 20 19" shape-rendering="crispEdges"><rect x="0" y="3" width="20" height="16" fill="#808080"/><rect x="1" y="4" width="18" height="14" fill="#fff"/><rect x="1" y="4" width="17" height="13" fill="#d4d0c8"/><rect x="1" y="4" width="17" height="0" fill="#000"/><rect x="2" y="0" width="7" height="3" fill="#000080"/><rect x="2" y="3" width="7" height="1" fill="#000080"/></svg>
<svg style="left:663px;top:74px" width="20" height="19" viewBox="0 0 20 19" shape-rendering="crispEdges"><rect x="0" y="3" width="20" height="16" fill="#808080"/><rect x="1" y="4" width="18" height="14" fill="#fff"/><rect x="1" y="4" width="17" height="13" fill="#d4d0c8"/><rect x="2" y="0" width="7" height="4" fill="#000080"/><rect x="3" y="7" width="2" height="2" fill="#000"/><rect x="7" y="7" width="9" height="1" fill="#000080"/><rect x="7" y="8" width="9" height="1" fill="#000"/><rect x="3" y="10" width="2" height="2" fill="#000"/><rect x="7" y="10" width="9" height="1" fill="#000080"/><rect x="7" y="11" width="9" height="1" fill="#000"/><rect x="3" y="13" width="2" height="2" fill="#000"/><rect x="7" y="13" width="9" height="1" fill="#000080"/><rect x="7" y="14" width="9" height="1" fill="#000"/></svg>
<svg style="left:691px;top:74px" width="20" height="20" viewBox="0 0 20 20" shape-rendering="crispEdges"><rect x="0" y="0" width="20" height="20" fill="#808080"/><rect x="0" y="0" width="19" height="19" fill="#fff"/><rect x="1" y="1" width="18" height="18" fill="#808080"/><rect x="1" y="1" width="17" height="17" fill="#d4d0c8"/></svg>
<svg style="left:720px;top:73px" width="20" height="23" viewBox="0 0 20 23" shape-rendering="crispEdges"><rect x="4" y="0" width="16" height="14" fill="#000"/><rect x="5" y="1" width="14" height="2" fill="#000080"/><rect x="5" y="3" width="14" height="10" fill="#fff"/><rect x="6" y="5" width="7" height="4" fill="#000080"/><rect x="7" y="6" width="5" height="2" fill="#fff"/><rect x="0" y="14" width="12" height="8" fill="#404040"/><rect x="0" y="13" width="11" height="8" fill="#fff"/><rect x="1" y="14" width="10" height="6" fill="#d4d0c8"/><text x="1" y="20" font-family="Liberation Sans" font-weight="bold" font-size="7" fill="#000">OK</text><path d="M8 8V20L11 17L13.5 22L15.5 21L13 16H17Z" fill="#fff" stroke="#000" stroke-width="1"/></svg>
<svg style="left:673px;top:29px" width="17" height="15" viewBox="0 0 17 15" shape-rendering="crispEdges"><rect x="0.5" y="3.5" width="9" height="6" fill="#5090c8" stroke="#204870"/><rect x="3.5" y="0.5" width="9" height="6" fill="#80b0d8" stroke="#204870"/><rect x="13" y="3" width="1" height="7" fill="#404040"/><path d="M11 9H16L13.5 12Z" fill="#404040" /><rect x="3" y="12" width="11" height="1" fill="#e04040"/><rect x="2" y="13" width="12" height="1" fill="#808080"/></svg>
<svg style="left:696px;top:28px" width="17" height="17" viewBox="0 0 17 17" shape-rendering="crispEdges"><rect x="0.5" y="4.5" width="9" height="6" fill="#808080" stroke="#505050"/><rect x="3.5" y="1.5" width="9" height="6" fill="#a0a0a0" stroke="#505050"/><path d="M10 6L16 11L10 16Z" fill="#808080" /></svg>
<svg style="left:0px;top:136px" width="20" height="50" viewBox="0 0 20 50" shape-rendering="crispEdges"><rect x="8" y="10" width="1" height="1" fill="#808080"/><rect x="8" y="12" width="1" height="1" fill="#808080"/><rect x="8" y="14" width="1" height="1" fill="#808080"/><rect x="8" y="16" width="1" height="1" fill="#808080"/><rect x="8" y="18" width="1" height="1" fill="#808080"/><rect x="8" y="20" width="1" height="1" fill="#808080"/><rect x="8" y="22" width="1" height="1" fill="#808080"/><rect x="8" y="24" width="1" height="1" fill="#808080"/><rect x="8" y="26" width="1" height="1" fill="#808080"/><rect x="8" y="28" width="1" height="1" fill="#808080"/><rect x="8" y="30" width="1" height="1" fill="#808080"/><rect x="8" y="32" width="1" height="1" fill="#808080"/><rect x="8" y="34" width="1" height="1" fill="#808080"/><rect x="8" y="36" width="1" height="1" fill="#808080"/><rect x="8" y="38" width="1" height="1" fill="#808080"/><rect x="8" y="40" width="1" height="1" fill="#808080"/><rect x="8" y="42" width="1" height="1" fill="#808080"/><rect x="9" y="10" width="1" height="1" fill="#808080"/><rect x="11" y="10" width="1" height="1" fill="#808080"/><rect x="13" y="10" width="1" height="1" fill="#808080"/><rect x="15" y="10" width="1" height="1" fill="#808080"/><rect x="17" y="10" width="1" height="1" fill="#808080"/><rect x="13" y="26" width="1" height="1" fill="#808080"/><rect x="13" y="42" width="1" height="1" fill="#808080"/><rect x="15" y="26" width="1" height="1" fill="#808080"/><rect x="15" y="42" width="1" height="1" fill="#808080"/><rect x="17" y="26" width="1" height="1" fill="#808080"/><rect x="17" y="42" width="1" height="1" fill="#808080"/><rect x="4" y="22" width="9" height="9" fill="#808080"/><rect x="5" y="23" width="7" height="7" fill="#fff"/><rect x="6" y="26" width="5" height="1" fill="#000"/><rect x="8" y="24" width="1" height="5" fill="#000"/><rect x="4" y="38" width="9" height="9" fill="#808080"/><rect x="5" y="39" width="7" height="7" fill="#fff"/><rect x="6" y="42" width="5" height="1" fill="#000"/><rect x="8" y="40" width="1" height="5" fill="#000"/></svg>
<svg style="left:19px;top:138px;shape-rendering:auto" width="15" height="16" viewBox="0 0 15 16" shape-rendering="crispEdges"><path d="M0 4L6 8L0 12Z" fill="#d01818" /><rect x="6" y="0" width="6" height="5" fill="#1830d0"/><rect x="5" y="0" width="2" height="3" fill="#80e0ff"/><circle cx="10" cy="11" r="3.6" fill="#b8a818" stroke="#303000" stroke-width="0.8"/></svg>
<svg style="left:19px;top:155px" width="15" height="13" viewBox="0 0 15 13" shape-rendering="crispEdges"><path d="M0.5 2.5L2.5 0.5H6.5L8.5 2.5H13.5V11.5H0.5Z" fill="#f0e890" stroke="#605820"/><rect x="1" y="12" width="14" height="1" fill="#101010"/><rect x="14" y="3" width="1" height="10" fill="#101010"/></svg>
<svg style="left:19px;top:171px" width="15" height="13" viewBox="0 0 15 13" shape-rendering="crispEdges"><path d="M0.5 2.5L2.5 0.5H6.5L8.5 2.5H13.5V11.5H0.5Z" fill="#f0e890" stroke="#605820"/><rect x="1" y="12" width="14" height="1" fill="#101010"/><rect x="14" y="3" width="1" height="10" fill="#101010"/></svg>
<span class="ts" style="left:41px;top:139px;transform:scaleX(.965);transform-origin:0 0">TForm1</span>
<span class="ts" style="left:41px;top:155px;transform:scaleX(.965);transform-origin:0 0">Variables/Constants</span>
<span class="ts" style="left:41px;top:171px;transform:scaleX(.965);transform-origin:0 0">Uses</span>
<div style="left:947px;top:124px;width:77px;height:24px;box-shadow:inset 1px 1px #fff"></div>
<svg style="left:954px;top:130px" width="15" height="13" viewBox="0 0 15 13" shape-rendering="crispEdges"><path d="M0 5.5L6 0V3H13V8H6V11Z" fill="#808080" /><path d="M6.5 11L6.5 8.5H13.5V3" stroke="#fff" fill="none"/></svg>
<svg style="left:977px;top:136px" width="7" height="4" viewBox="0 0 7 4" shape-rendering="crispEdges"><path d="M0 0H6L3 3Z" fill="#808080" /></svg>
<svg style="left:990px;top:130px" width="15" height="13" viewBox="0 0 15 13" shape-rendering="crispEdges"><path d="M13 5.5L7 0V3H0V8H7V11Z" fill="#808080" /><path d="M0.5 8.5H7.5V11" stroke="#fff" fill="none"/></svg>
<svg style="left:1014px;top:136px" width="7" height="4" viewBox="0 0 7 4" shape-rendering="crispEdges"><path d="M0 0H6L3 3Z" fill="#808080" /></svg>
<svg style="left:440px;top:718px;shape-rendering:auto" width="93" height="17" viewBox="0 0 93 17" shape-rendering="crispEdges"><path d="M4 0.5L9.5 15.5H37.5L41.5 0.5Z" fill="#d4d0c8"/><path d="M4 0.5L9.5 15.5H37.5L41.5 0.5" fill="none" stroke="#000" stroke-width="1.1"/><path d="M41.5 0.5H90.5L85.5 15.5H44L41.5 0.5Z" fill="#fff"/><path d="M41.5 0.5L44 15.5H85.5L90.5 0.5" fill="none" stroke="#000" stroke-width="1.1"/></svg>
<span class="ts" style="left:451px;top:720px;transform:scaleX(.93);transform-origin:0 0">Code</span>
<span class="ts" style="left:485px;top:720px;transform:scaleX(.93);transform-origin:0 0">Diagram</span>
<svg style="left:1009px;top:724px;shape-rendering:auto" width="14" height="14" viewBox="0 0 14 14" shape-rendering="crispEdges"><path d="M1 13L13 1" stroke="#808080" stroke-width="1.6"/><path d="M3 13L13 3" stroke="#fff" stroke-width="1"/><path d="M5 13L13 5" stroke="#808080" stroke-width="1.6"/><path d="M7 13L13 7" stroke="#fff" stroke-width="1"/><path d="M9 13L13 9" stroke="#808080" stroke-width="1.6"/><path d="M11 13L13 11" stroke="#fff" stroke-width="1"/></svg>
<svg style="left:4px;top:744px;shape-rendering:auto" width="16" height="16" viewBox="0 0 16 16" shape-rendering="crispEdges"><g transform="rotate(-6 8 8)"><path d="M1 1Q4 0 8 1V7Q4 6 1 7Z" fill="#e05820" /><path d="M9 2Q12 1 15 2V8Q12 7 9 8Z" fill="#50b030" /><path d="M1 8Q4 7 8 8V14Q4 13 1 14Z" fill="#3868d8" /><path d="M9 9Q12 8 15 9V15Q12 14 9 15Z" fill="#e8c818" /></g></svg>
<svg style="left:22px;top:746px;shape-rendering:crispEdges" width="24" height="12" viewBox="0 0 24 12" shape-rendering="crispEdges"><g stroke="#000" stroke-width="1" fill="none"><path d="M1 1.5H10M0 5.5H11M8.5 1V11M3.5 1V7L0.5 10.5"/><path transform="translate(12 0)" d="M2.5 0L1.5 4.5L4.5 10.5M4.5 4.5L2 9L0 10.5M0 4.5H5.5M8.5 0L6.5 3.5H10.5M9.5 2L11 4M6.5 6.5H11.5V11.5H6.5Z"/></g></svg>
<svg style="left:57px;top:745px;shape-rendering:auto" width="16" height="16" viewBox="0 0 16 16" shape-rendering="crispEdges"><circle cx="8" cy="8" r="7.5" fill="#2040a0"/><circle cx="8" cy="8" r="6" fill="#d0e0f0"/><circle cx="8" cy="8" r="4.5" fill="#1030a0"/><path d="M6.5 5.5L11 8L6.5 10.5Z" fill="#fff"/></svg>
<svg style="left:80px;top:745px;shape-rendering:auto" width="16" height="16" viewBox="0 0 16 16" shape-rendering="crispEdges"><circle cx="8" cy="9" r="6" fill="#1870d8"/><circle cx="8" cy="9" r="3.2" fill="#e8f4ff"/><rect x="4" y="8" width="9" height="1.6" fill="#1870d8"/><rect x="9" y="10" width="6" height="2" fill="#e8f4ff"/><ellipse cx="8" cy="8" rx="8" ry="3" fill="none" stroke="#2890f0" stroke-width="1.2" transform="rotate(-30 8 8)"/></svg>
<svg style="left:103px;top:745px;shape-rendering:auto" width="16" height="17" viewBox="0 0 16 17" shape-rendering="crispEdges"><ellipse cx="8" cy="9" rx="5" ry="7" fill="#202020"/><ellipse cx="8" cy="11" rx="3.5" ry="4" fill="#fff"/><path d="M3 8H13V10H3Z" fill="#e02020"/><path d="M9 10H12V14H9Z" fill="#e02020"/><ellipse cx="5" cy="16" rx="3" ry="1.2" fill="#f0a000"/><ellipse cx="11" cy="16" rx="3" ry="1.2" fill="#f0a000"/><circle cx="7" cy="5" r="1" fill="#fff"/><circle cx="9.5" cy="5" r="1" fill="#fff"/></svg>
<svg style="left:126px;top:745px;shape-rendering:auto" width="16" height="16" viewBox="0 0 16 16" shape-rendering="crispEdges"><rect x="0.5" y="1.5" width="14" height="14" rx="2" fill="#3070c8" stroke="#104090" transform="rotate(-8 8 8)"/><rect x="3" y="4" width="9" height="9" fill="#e0f0ff"/><path d="M5 8H10M7 6L5 8L7 10" stroke="#2050a0" stroke-width="1.5" fill="none"/></svg>
<svg style="left:179px;top:746px;shape-rendering:auto" width="16" height="12" viewBox="0 0 16 12" shape-rendering="crispEdges"><path d="M0.5 5.5L4.5 1.5H14.5L15.5 5.5V9.5H0.5Z" fill="#c0c0c0" stroke="#606060"/><rect x="2" y="6" width="12" height="2" fill="#808080"/><rect x="11" y="6" width="2" height="1" fill="#40a040"/></svg>
<svg style="left:341px;top:745px" width="17" height="17" viewBox="0 0 17 17" shape-rendering="crispEdges"><path d="M1.5 1H10V3.5L6.5 10L5.5 16H1L3 10L6 4H1.5Z" fill="#c8a830" shape-rendering="auto"/><path d="M1.5 1H10V3H1.5Z" fill="#e8e050" /><path d="M6 3.5H9L6 10L5 15.5H2.5L3.5 10Z" fill="#e0d048" shape-rendering="auto"/><circle cx="12.5" cy="9" r="4.3" fill="#0a5a70" shape-rendering="auto"/><circle cx="12" cy="8.3" r="2.6" fill="#20a090" shape-rendering="auto"/><circle cx="11.5" cy="7.5" r="1" fill="#80e0d0" shape-rendering="auto"/></svg>
<svg style="left:859px;top:747px" width="16" height="13" viewBox="0 0 16 13" shape-rendering="crispEdges"><rect x="0" y="3" width="16" height="10" fill="#404040"/><rect x="1" y="4" width="14" height="8" fill="#fff"/><rect x="2" y="6" width="2" height="1" fill="#404040"/><rect x="2" y="8" width="2" height="1" fill="#404040"/><rect x="5" y="6" width="2" height="1" fill="#404040"/><rect x="5" y="8" width="2" height="1" fill="#404040"/><rect x="8" y="6" width="2" height="1" fill="#404040"/><rect x="8" y="8" width="2" height="1" fill="#404040"/><rect x="11" y="6" width="2" height="1" fill="#404040"/><rect x="11" y="8" width="2" height="1" fill="#404040"/><rect x="14" y="6" width="2" height="1" fill="#404040"/><rect x="14" y="8" width="2" height="1" fill="#404040"/><rect x="4" y="10" width="8" height="1" fill="#404040"/><rect x="6" y="0" width="1" height="3" fill="#404040"/><rect x="8" y="0" width="1" height="3" fill="#404040"/><rect x="10" y="0" width="1" height="3" fill="#404040"/><rect x="12" y="0" width="1" height="3" fill="#404040"/></svg>
<div style="left:880px;top:743px;width:1px;height:22px;background:#808080"></div>
<div style="left:881px;top:743px;width:1px;height:22px;background:#fff"></div>
<svg style="left:888px;top:747px;shape-rendering:auto" width="13" height="15" viewBox="0 0 13 15" shape-rendering="crispEdges"><path d="M0.5 0.5H12.5V10.5H6.5L4.5 13.5V10.5H0.5Z" fill="#ffffc0" stroke="#000"/><text x="3" y="9" font-family="Liberation Sans" font-weight="bold" font-size="9" fill="#000">?</text></svg>
<div style="left:907px;top:743px;width:1px;height:22px;background:#808080"></div>
<div style="left:908px;top:743px;width:1px;height:22px;background:#fff"></div>
<svg style="left:912px;top:747px" width="8" height="17" viewBox="0 0 8 17" shape-rendering="crispEdges"><rect x="3" y="2" width="3" height="1" fill="#000"/><rect x="2" y="3" width="1" height="3" fill="#000"/><rect x="3" y="5" width="3" height="1" fill="#000"/><rect x="5" y="3" width="1" height="2" fill="#000"/><path d="M3 13H7L5 15Z" fill="#000" /></svg>
<svg style="left:925px;top:747px" width="15" height="15" viewBox="0 0 15 15" shape-rendering="crispEdges"><rect x="5" y="0" width="9" height="8" fill="#202860"/><rect x="6" y="1" width="7" height="5" fill="#5060c8"/><rect x="7" y="2" width="3" height="2" fill="#8090f0"/><rect x="6" y="8" width="7" height="2" fill="#c0c8e0"/><rect x="0" y="4" width="9" height="8" fill="#202860"/><rect x="1" y="5" width="7" height="6" fill="#4050b8"/><rect x="2" y="6" width="3" height="2" fill="#8090f0"/><rect x="1" y="12" width="8" height="2" fill="#d0d8f0"/><rect x="2" y="14" width="6" height="1" fill="#8090c0"/></svg>
<svg style="left:943px;top:746px;shape-rendering:auto" width="16" height="16" viewBox="0 0 16 16" shape-rendering="crispEdges"><circle cx="6.5" cy="6.5" r="5.5" fill="#a0a0a8" stroke="#404048" stroke-width="1.2"/><circle cx="6" cy="6" r="2.5" fill="#e8e8f0"/><circle cx="6.5" cy="6.5" r="1.2" fill="#505058"/><path d="M9 12Q12 11 12.5 8M10 14.5Q14.5 13 15 9" stroke="#9898e0" stroke-width="1" fill="none"/></svg>
<svg style="left:962px;top:746px;shape-rendering:auto" width="16" height="16" viewBox="0 0 16 16" shape-rendering="crispEdges"><path d="M4.5 7.5L13.5 3.5L14.5 11.5L6.5 15.5Z" fill="#e0e8e0" stroke="#305030"/><path d="M7 10L12 8V11L8 13Z" fill="#206040"/><path d="M1 2L5 0L7 4L10 3L6 10L1 7L3 6Z" fill="#40c040" stroke="#106010" stroke-width="0.8"/></svg>
<svg style="left:330px;top:438px;shape-rendering:auto" width="32" height="32" viewBox="0 0 32 32" shape-rendering="crispEdges"><defs><radialGradient id="rg" cx="40%" cy="35%" r="65%"><stop offset="0" stop-color="#f04040"/><stop offset="0.7" stop-color="#c00000"/><stop offset="1" stop-color="#800000"/></radialGradient></defs><circle cx="16" cy="16" r="15" fill="url(#rg)" stroke="#a00000" stroke-width="1"/><path d="M10 10L22 22M22 10L10 22" stroke="#fff" stroke-width="3.5"/></svg>
<svg style="left:324px;top:505px;shape-rendering:auto" width="9" height="9" viewBox="0 0 9 9" shape-rendering="crispEdges"><path d="M1 4L3 7L8 1.5" stroke="#000" stroke-width="2" fill="none"/></svg>
<div style="left:338px;top:503px;width:94px;height:12px;border:1px dotted #000"></div>
</body></html>
